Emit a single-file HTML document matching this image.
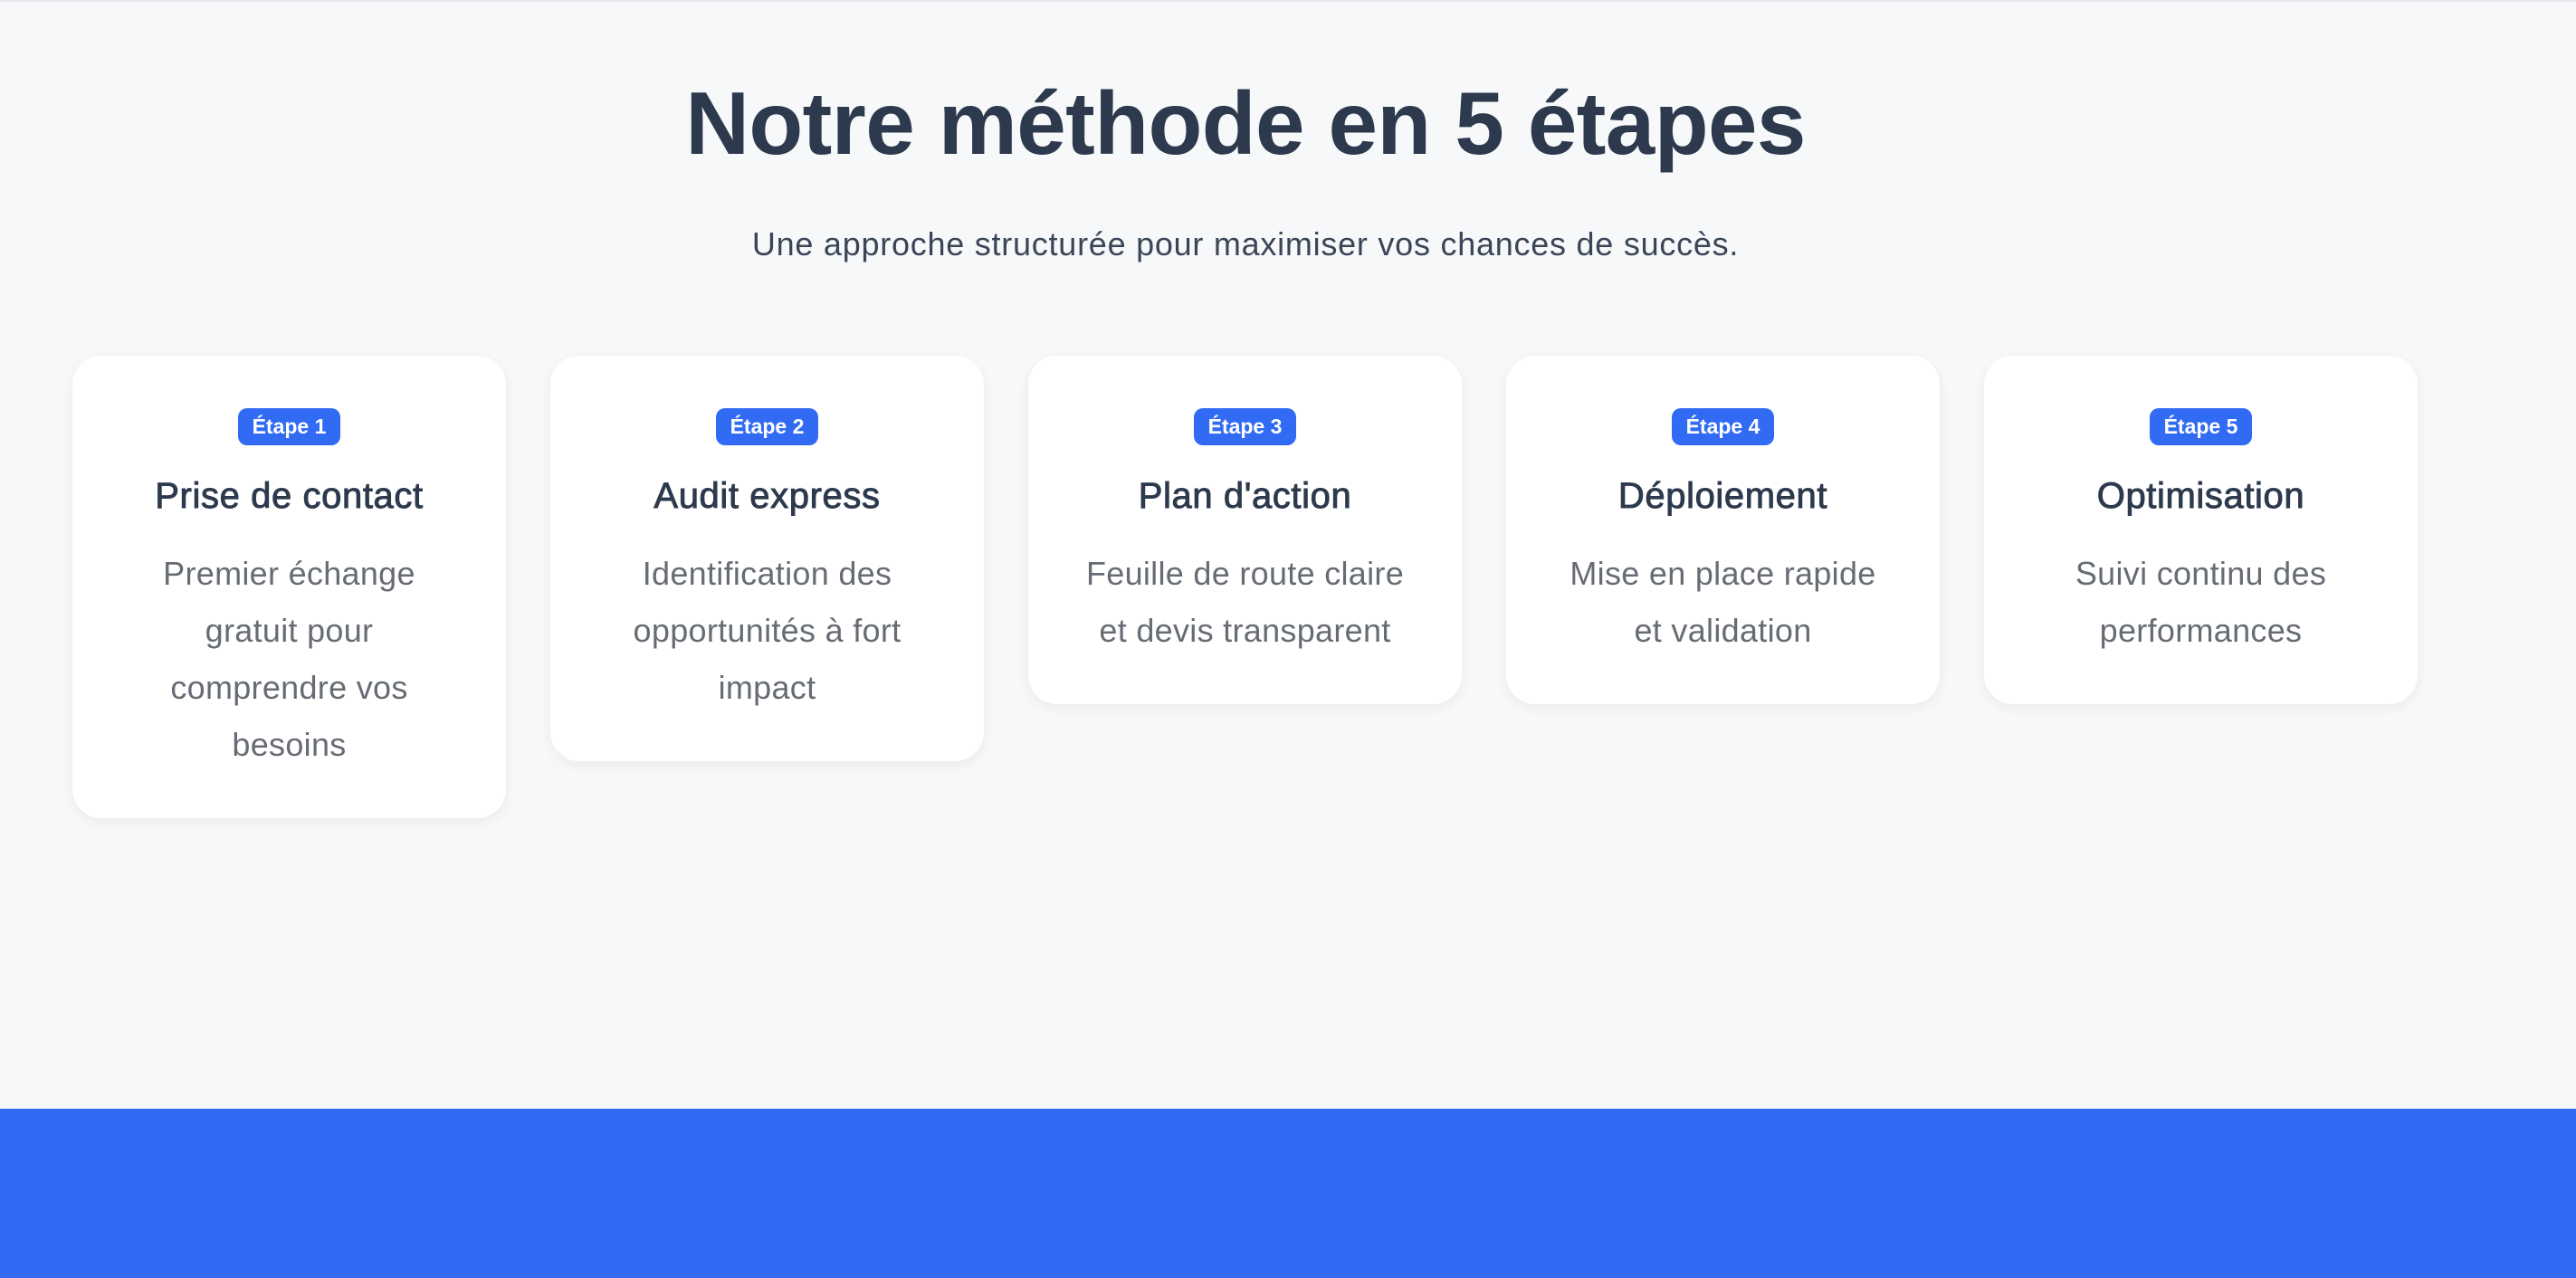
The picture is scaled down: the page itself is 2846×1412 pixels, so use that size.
<!DOCTYPE html>
<html><head><meta charset="utf-8"><style>
html,body{margin:0;padding:0}
body{width:2846px;height:1412px;background:#f7f8fa;position:relative;overflow:hidden;font-family:"Liberation Sans",sans-serif}
.topsh{position:absolute;left:0;top:0;width:2846px;height:4px;background:linear-gradient(#e4e6ea,#f7f8fa)}
h1{position:absolute;left:0;width:2752px;top:76px;margin:0;text-align:center;font-size:98px;line-height:120px;font-weight:700;color:#2d3a4d;letter-spacing:-0.6px}
.sub{position:absolute;left:0;width:2752px;top:248px;text-align:center;font-size:36px;line-height:44px;color:#3a4658;letter-spacing:0.75px}
.card{position:absolute;top:393px;width:479px;box-sizing:border-box;background:#fff;border-radius:32px;box-shadow:0 4px 14px rgba(0,0,0,0.06);text-align:center;padding:58px 10px 50px}
.badge{display:inline-block;height:41px;line-height:41px;padding:0 16px;background:#316bf3;color:#fff;font-weight:700;font-size:23px;border-radius:10px}
.t{margin-top:32px;font-size:40px;line-height:48px;color:#2d3a4d;-webkit-text-stroke:0.9px #2d3a4d;letter-spacing:0.6px}
.d{margin-top:30px;font-size:36px;line-height:63px;color:#676c74;white-space:nowrap;letter-spacing:0.3px}
.foot{position:absolute;left:0;top:1225px;width:2846px;height:187px;background:#316bf3}
</style></head><body>
<div class="topsh"></div>
<h1>Notre méthode en 5 étapes</h1>
<div class="sub">Une approche structurée pour maximiser vos chances de succès.</div>
<div class="card" style="left:80px"><span class="badge">Étape 1</span><div class="t">Prise de contact</div><div class="d">Premier échange<br>gratuit pour<br>comprendre vos<br>besoins</div></div>
<div class="card" style="left:608px"><span class="badge">Étape 2</span><div class="t">Audit express</div><div class="d">Identification des<br>opportunités à fort<br>impact</div></div>
<div class="card" style="left:1136px"><span class="badge">Étape 3</span><div class="t">Plan d'action</div><div class="d">Feuille de route claire<br>et devis transparent</div></div>
<div class="card" style="left:1664px"><span class="badge">Étape 4</span><div class="t">Déploiement</div><div class="d">Mise en place rapide<br>et validation</div></div>
<div class="card" style="left:2192px"><span class="badge">Étape 5</span><div class="t">Optimisation</div><div class="d">Suivi continu des<br>performances</div></div>
<div class="foot"></div>
</body></html>
